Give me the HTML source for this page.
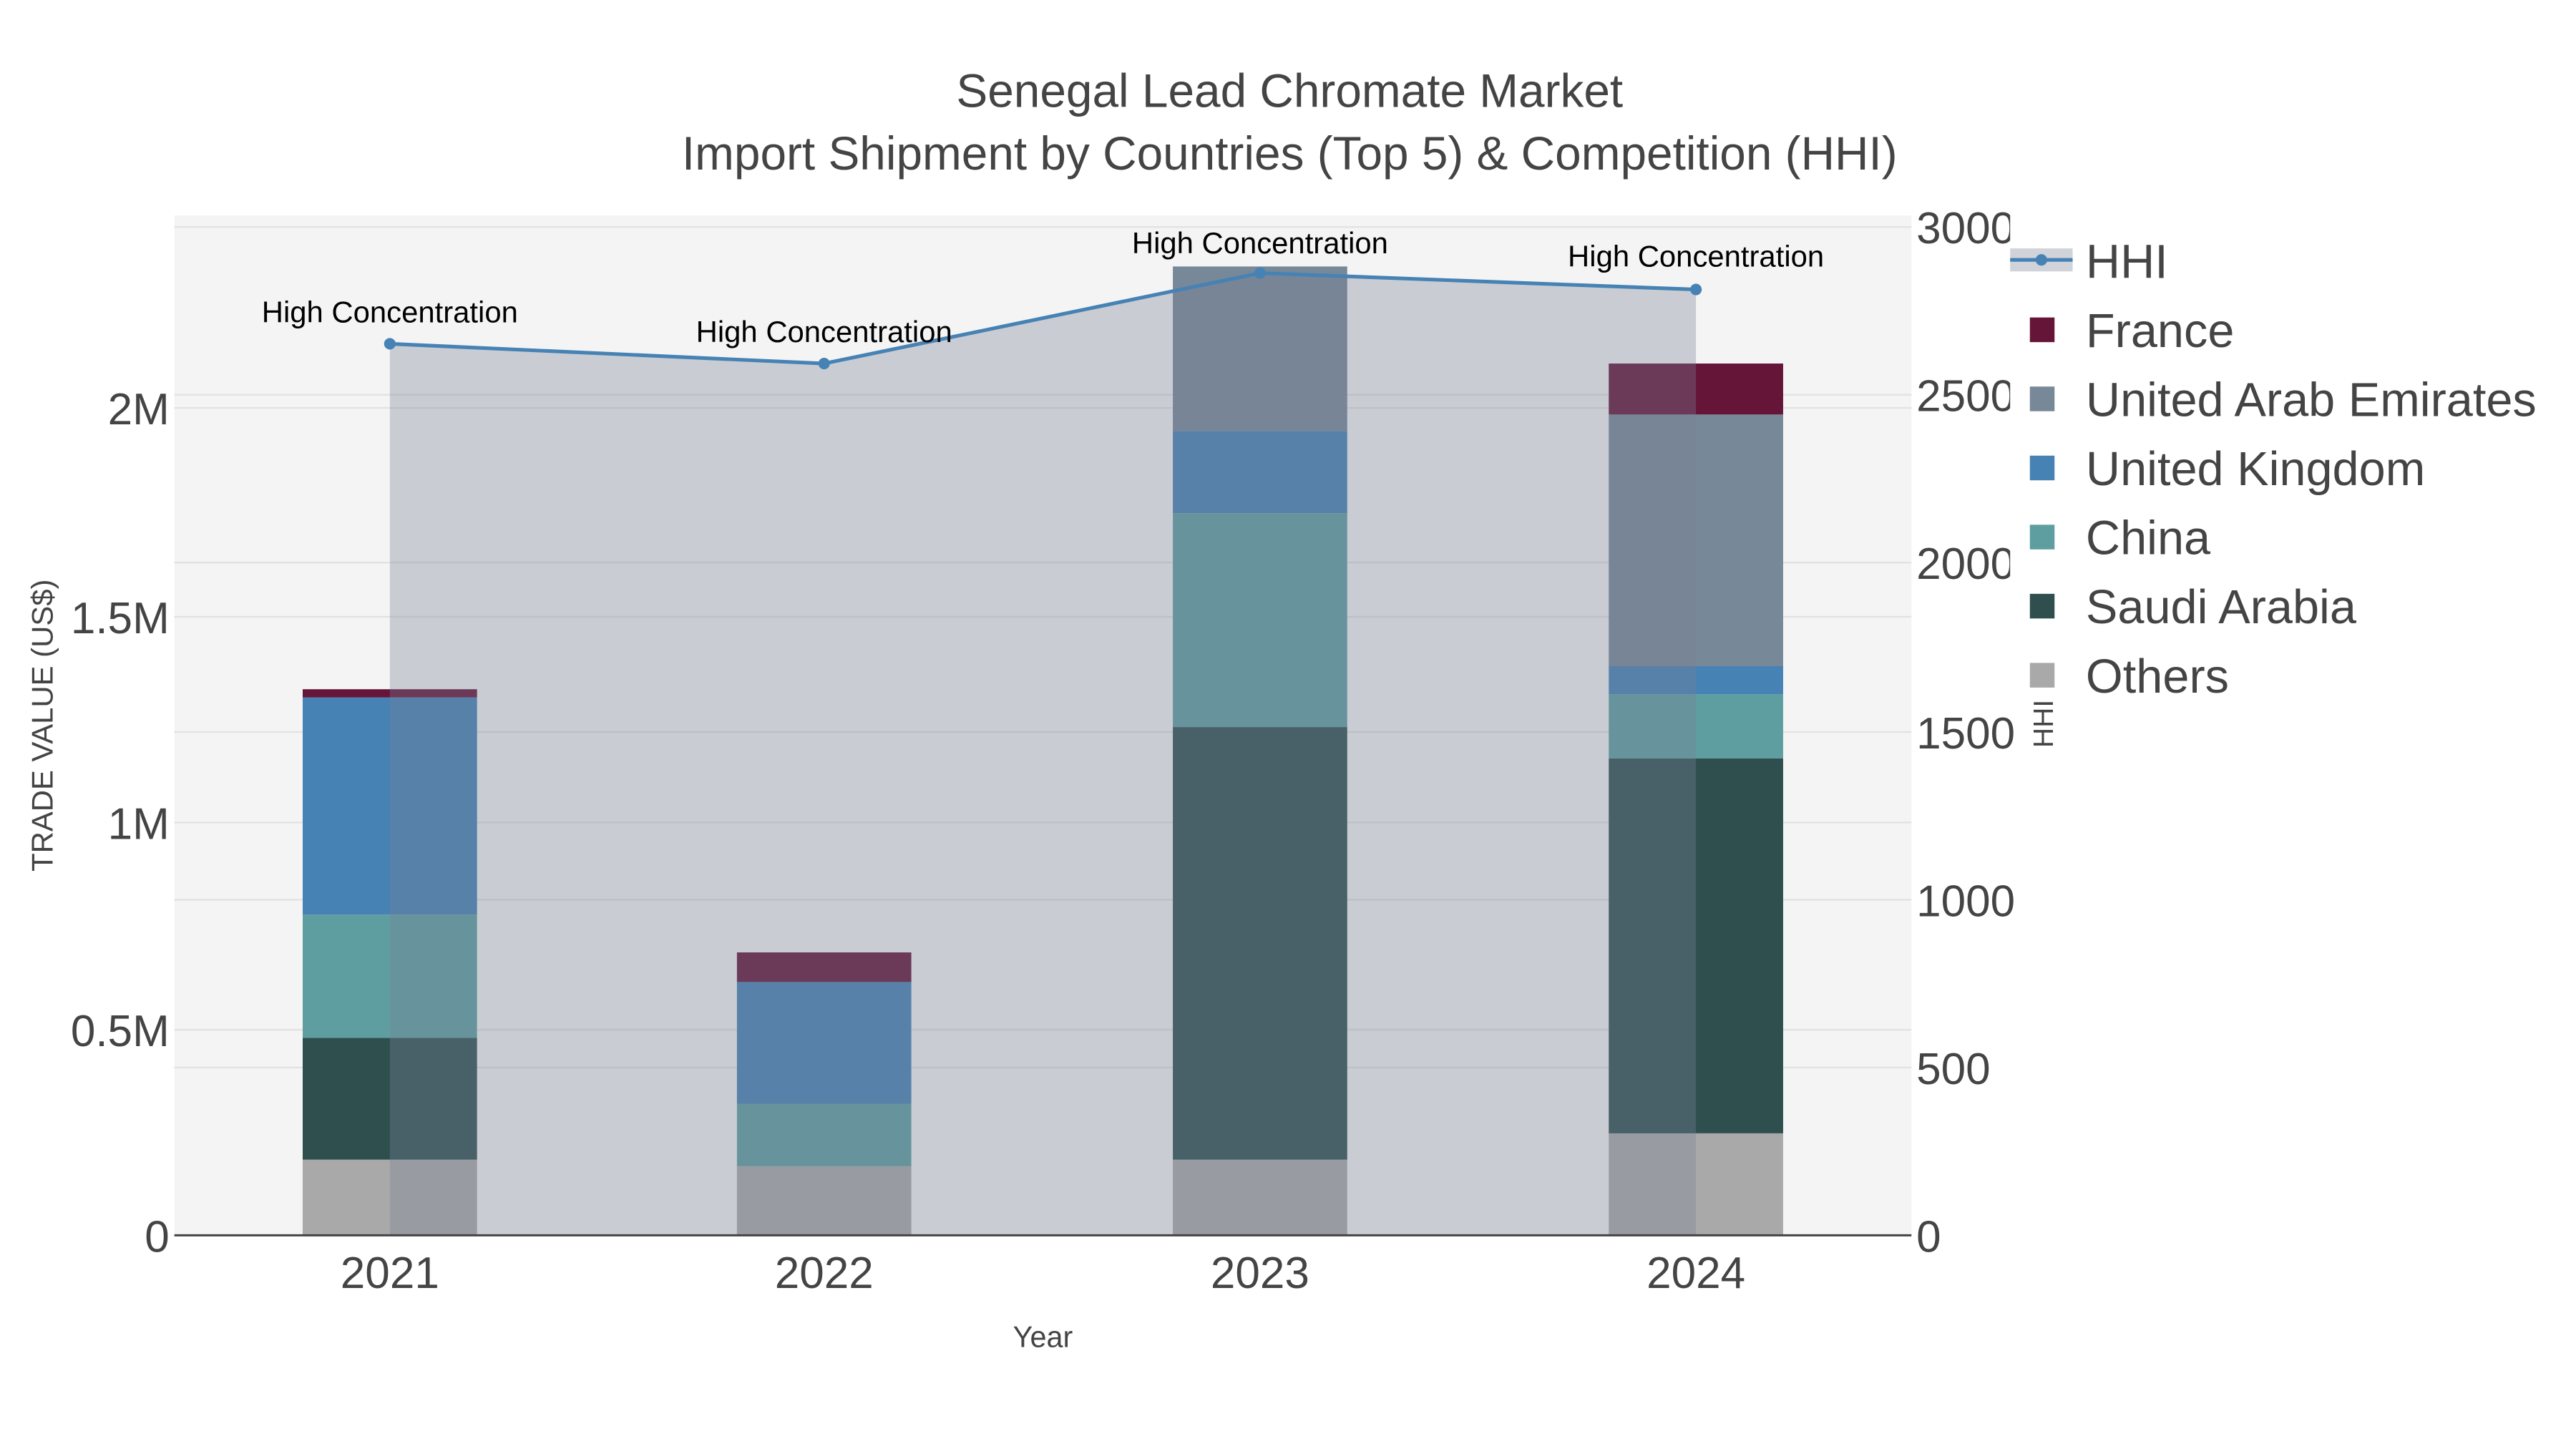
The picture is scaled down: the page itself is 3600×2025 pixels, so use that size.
<!DOCTYPE html>
<html><head><meta charset="utf-8"><style>
html,body{margin:0;padding:0;background:#fff;}
svg{display:block;}
text{font-family:"Liberation Sans",sans-serif;}
</style></head><body>
<svg width="3600" height="2025" viewBox="0 0 1566 880.9" preserveAspectRatio="none" xmlns="http://www.w3.org/2000/svg">
<rect width="1570" height="890" fill="#fff"/>
<rect x="106" y="131" width="1056" height="620" fill="#f4f4f4"/>
<g stroke="#e2e2e2" stroke-width="1">
<line x1="106" x2="1162" y1="626" y2="626"/><line x1="106" x2="1162" y1="500" y2="500"/>
<line x1="106" x2="1162" y1="375" y2="375"/><line x1="106" x2="1162" y1="248" y2="248"/>
<line x1="106" x2="1162" y1="649" y2="649"/><line x1="106" x2="1162" y1="547" y2="547"/>
<line x1="106" x2="1162" y1="445" y2="445"/><line x1="106" x2="1162" y1="342" y2="342"/>
<line x1="106" x2="1162" y1="240" y2="240"/><line x1="106" x2="1162" y1="138" y2="138"/>
</g>
<g>
<rect x="184" y="705" width="106" height="46" fill="#a9a9a9"/>
<rect x="184" y="631" width="106" height="74" fill="#2f4f4f"/>
<rect x="184" y="556" width="106" height="75" fill="#5f9ea0"/>
<rect x="184" y="424" width="106" height="132" fill="#4682b4"/>
<rect x="184" y="419" width="106" height="5" fill="#651538"/>

<rect x="448" y="709" width="106" height="42" fill="#a9a9a9"/>
<rect x="448" y="671" width="106" height="38" fill="#5f9ea0"/>
<rect x="448" y="597" width="106" height="74" fill="#4682b4"/>
<rect x="448" y="579" width="106" height="18" fill="#651538"/>

<rect x="713" y="705" width="106" height="46" fill="#a9a9a9"/>
<rect x="713" y="442" width="106" height="263" fill="#2f4f4f"/>
<rect x="713" y="312" width="106" height="130" fill="#5f9ea0"/>
<rect x="713" y="262" width="106" height="50" fill="#4682b4"/>
<rect x="713" y="162" width="106" height="100" fill="#778899"/>

<rect x="978" y="689" width="106" height="62" fill="#a9a9a9"/>
<rect x="978" y="461" width="106" height="228" fill="#2f4f4f"/>
<rect x="978" y="422" width="106" height="39" fill="#5f9ea0"/>
<rect x="978" y="405" width="106" height="17" fill="#4682b4"/>
<rect x="978" y="252" width="106" height="153" fill="#778899"/>
<rect x="978" y="221" width="106" height="31" fill="#651538"/>
</g>
<polygon points="237,751 237,209 501,221 766,166 1031,176 1031,751" fill="rgb(120,130,150)" fill-opacity="0.35"/>
<polyline points="237,209 501,221 766,166 1031,176" fill="none" stroke="#4682b4" stroke-width="2.2"/>
<g fill="#4682b4"><circle cx="237" cy="209" r="3.5"/><circle cx="501" cy="221" r="3.5"/><circle cx="766" cy="166" r="3.5"/><circle cx="1031" cy="176" r="3.5"/></g>
<line x1="106" x2="1162" y1="751" y2="751" stroke="#444" stroke-width="1.3"/>
<g font-size="18.2" fill="#000" text-anchor="middle">
<text x="237" y="196">High Concentration</text>
<text x="501" y="208">High Concentration</text>
<text x="766" y="154">High Concentration</text>
<text x="1031" y="162">High Concentration</text>
</g>
<g fill="#444" text-anchor="middle" font-size="28.6">
<text x="784" y="65">Senegal Lead Chromate Market</text>
<text x="784" y="103">Import Shipment by Countries (Top 5) &amp; Competition (HHI)</text>
</g>
<g fill="#444" font-size="27" text-anchor="end">
<text x="103" y="761">0</text><text x="103" y="636">0.5M</text><text x="103" y="510">1M</text>
<text x="103" y="385">1.5M</text><text x="103" y="258">2M</text>
</g>
<g fill="#444" font-size="27">
<text x="1165" y="761">0</text><text x="1165" y="659">500</text><text x="1165" y="557">1000</text>
<text x="1165" y="455">1500</text><text x="1165" y="352">2000</text><text x="1165" y="250">2500</text><text x="1165" y="148">3000</text>
</g>
<g fill="#444" font-size="27" text-anchor="middle">
<text x="237" y="783">2021</text><text x="501" y="783">2022</text><text x="766" y="783">2023</text><text x="1031" y="783">2024</text>
</g>
<text x="634" y="819" fill="#444" font-size="18" text-anchor="middle">Year</text>
<text transform="translate(32,441) rotate(-90)" fill="#444" font-size="18.2" text-anchor="middle">TRADE VALUE (US$)</text>
<rect x="1222" y="120" width="348" height="310" fill="#fff"/>
<text transform="translate(1248,440) rotate(-90)" fill="#444" font-size="17" text-anchor="middle">HHI</text>
<rect x="1222" y="151" width="38" height="14" fill="rgb(120,130,150)" fill-opacity="0.35"/>
<line x1="1222" x2="1260" y1="158" y2="158" stroke="#4682b4" stroke-width="2.2"/>
<circle cx="1241" cy="158" r="3.5" fill="#4682b4"/>
<rect x="1234" y="193" width="15" height="15" fill="#651538"/>
<rect x="1234" y="235" width="15" height="15" fill="#778899"/>
<rect x="1234" y="277" width="15" height="15" fill="#4682b4"/>
<rect x="1234" y="319" width="15" height="15" fill="#5f9ea0"/>
<rect x="1234" y="361" width="15" height="15" fill="#2f4f4f"/>
<rect x="1234" y="403" width="15" height="15" fill="#a9a9a9"/>
<g fill="#444" font-size="29">
<text x="1268" y="169">HHI</text>
<text x="1268" y="211">France</text>
<text x="1268" y="253">United Arab Emirates</text>
<text x="1268" y="295">United Kingdom</text>
<text x="1268" y="337">China</text>
<text x="1268" y="379">Saudi Arabia</text>
<text x="1268" y="421">Others</text>
</g>
</svg>
</body></html>
